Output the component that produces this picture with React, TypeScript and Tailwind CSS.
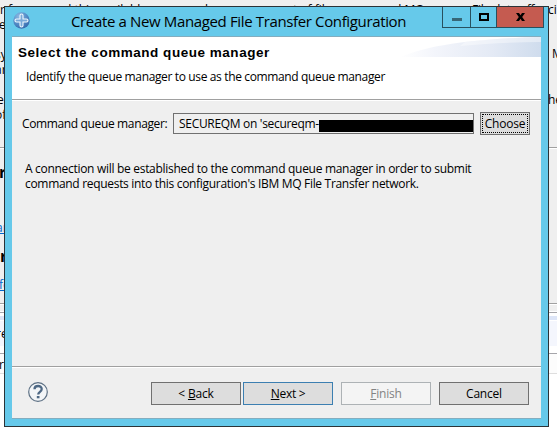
import type { ReactNode } from 'react';

function Line({ children, className }: { children: ReactNode; className: string }) {
  return <span className={'block whitespace-pre ' + className}>{children}</span>;
}

function Backdrop() {
  return (
    <div className="flex h-[433px] w-[557px] flex-col overflow-hidden bg-white">
      <div className="h-[147px] shrink-0 bg-[#efefef]" />
      <div className="h-px shrink-0 bg-[#a0a0a0]" />
      <div className="h-px shrink-0 bg-white" />
      <div className="h-[154px] shrink-0 bg-[#efefef]" />
      <div className="h-px shrink-0 bg-[#a0a0a0]" />
      <div className="h-px shrink-0 bg-white" />
      <div className="h-[6px] shrink-0 bg-[#efefef]" />
      <div className="h-px shrink-0 bg-white" />
      <div className="h-px shrink-0 bg-[#a5a5aa]" />
      <div className="h-[3px] shrink-0 bg-white" />
      <div className="h-1 shrink-0 bg-[#dde5f7]" />
      <div className="h-px shrink-0 bg-white" />
      <div className="h-[25px] shrink-0 bg-[#f4f6fd]" />
      <div className="h-[7px] shrink-0 bg-white" />
      <div className="h-px shrink-0 bg-[#a5a5aa]" />
      <div className="h-[19px] shrink-0 bg-[#fcfcfc]" />
      <div className="h-px shrink-0 bg-[#dedede]" />
    </div>
  );
}

function Scrap({ x, y, className = 'text-[12px]', children }: { x: number; y: number; className?: string; children: ReactNode }) {
  return (
    <span className={'absolute whitespace-pre leading-4 ' + className} style={{ left: x, top: y }}>
      {children}
    </span>
  );
}

function WizardButton({ className, children }: { className: string; children: ReactNode }) {
  return (
    <button className={'flex h-[23px] w-[90px] items-center justify-center border text-[12px] leading-4 ' + className}>
      {children}
    </button>
  );
}

export default function App() {
  return (
    <div className="relative h-[433px] w-[557px] overflow-hidden font-['Open_Sans','Noto_Sans',sans-serif] text-black">
      <Backdrop />
      <Scrap x={0} y={2}>r f</Scrap>
      <Scrap x={64} y={2}>d this available</Scrap>
      <Scrap x={205} y={2}>b</Scrap>
      <Scrap x={293} y={2}>t of files</Scrap>
      <Scrap x={394} y={2}>d MQ</Scrap>
      <Scrap x={472} y={2} className="text-[12px] tracking-[-0.2px]">File data eff</Scrap>
      <Scrap x={548} y={2}>ci</Scrap>
      <Scrap x={-1} y={17}>e</Scrap>
      <Scrap x={-5} y={47}>sy</Scrap>
      <Scrap x={-5} y={62}>ar</Scrap>
      <Scrap x={552} y={46}>M</Scrap>
      <Scrap x={-3} y={92}>e</Scrap>
      <Scrap x={548} y={92}>he</Scrap>
      <Scrap x={-5} y={107}>of</Scrap>
      <Scrap x={-1} y={164} className="text-[16px] font-bold">r</Scrap>
      <Scrap x={-4} y={220} className="text-[12px] text-[#0066cc] underline">ar</Scrap>
      <Scrap x={0} y={248} className="text-[16px] font-bold">r</Scrap>
      <Scrap x={-1} y={277} className="text-[12px] text-[#0066cc] underline">fe</Scrap>
      <Scrap x={-4} y={326}>re</Scrap>
      <Scrap x={-1} y={357}>rr</Scrap>

      <div className="absolute left-1 top-[6px] flex h-[421px] w-[545px] flex-col border border-[#2b3337] bg-[#66c9ea]">
        <header className="flex h-[29px] shrink-0 items-start">
          <svg className="ml-2 mt-[5px] h-[17px] w-[17px] shrink-0" viewBox="0 0 17 17">
            <defs>
              <radialGradient id="orb" cx=".35" cy=".25" r=".8">
                <stop offset="0" stopColor="#8db8e2" />
                <stop offset=".5" stopColor="#5a92cb" />
                <stop offset="1" stopColor="#3468ac" />
              </radialGradient>
            </defs>
            <circle cx="8.5" cy="8.5" r="8.2" fill="url(#orb)" />
            <path d="M7 3.500a1.500 1.500 0 0 1 3 0V7h3.500a1.500 1.500 0 0 1 0 3H10v3.500a1.500 1.500 0 0 1-3 0V10H3.500a1.500 1.500 0 0 1 0-3H7z" fill="#79a9d8" stroke="#f0f7fd" strokeWidth="1.100" />
          </svg>
          <h1 className="ml-[41px] mt-[3px] w-[371px] text-[15px] leading-[22px] font-normal">
            <Line className="tracking-[-0.36px]">Create a New Managed File Transfer Configuration</Line>
          </h1>
          <div className="flex h-[21px] w-[102px] shrink-0 border-x border-b border-[#28505e]">
            <button className="flex w-[27px] items-center justify-center">
              <span className="mt-[5px] h-[3px] w-[10px] bg-[#376777]" />
            </button>
            <button className="flex w-[27px] items-center justify-center border-x border-[#28505e]">
              <span className="h-2 w-[10px] border-2 border-black" />
            </button>
            <button className="flex w-[46px] items-center justify-center bg-[#c55b50]">
              <svg className="h-2 w-[9px]" viewBox="0 0 9 8">
                <path d="M0 0h3l1.500 2.300L6 0h3L6.200 4 9 8H6L4.500 5.700 3 8H0l2.800-4z" />
              </svg>
            </button>
          </div>
        </header>

        <main className="ml-[7px] mr-[7px] flex h-[383px] shrink-0 flex-col border-y border-[#83adbf] bg-[#efefef]">
          <section className="flex h-[62px] shrink-0 bg-white">
            <div className="w-[388px] pl-[6px] pt-2">
              <h2 className="font-['Liberation_Sans',Arial,sans-serif] text-[13.5px] leading-4 font-bold">
                <Line className="tracking-[0.53px]">Select the command queue manager</Line>
              </h2>
              <p className="ml-2 mt-2 text-[12px] leading-4">
                <Line className="tracking-[-0.36px]">Identify the queue manager to use as the command queue manager</Line>
              </p>
            </div>
            <svg className="h-5 w-[141px]" viewBox="0 0 141 20">
              <defs>
                <linearGradient id="swoosh">
                  <stop offset="0" stopColor="#fff" />
                  <stop offset=".25" stopColor="#f3f5fb" />
                  <stop offset=".65" stopColor="#e4eaf5" />
                  <stop offset="1" stopColor="#cfdced" />
                </linearGradient>
              </defs>
              <path d="M0 20C30 8 70 2 141 0v20z" fill="url(#swoosh)" />
              <path d="M65 5Q100 1 141 0v5Q105 5 60 9z" fill="#fff" opacity=".4" />
            </svg>
          </section>
          <div className="h-px shrink-0 bg-[#a0a0a0]" />
          <div className="h-px shrink-0 bg-white" />

          <section className="flex h-[265px] shrink-0 flex-col pt-[11px]">
            <div className="flex h-[23px] items-center pl-[10px]">
              <label className="w-[151px] text-[12px] leading-4">
                <Line className="tracking-[-0.36px]">Command queue manager:</Line>
              </label>
              <div className="flex h-[21px] w-[301px] items-center border border-[#707070] pl-[5px] text-[12px] leading-4">
                <Line className="w-[140px] shrink-0 tracking-[-0.31px]">SECUREQM on 'secureqm-</Line>
                <span className="mt-1 h-3 w-[154px] shrink-0 bg-black" />
              </div>
              <button className="ml-[6px] flex h-[23px] w-[50px] items-center border border-[#707070] bg-[#dddddd] p-px">
                <span className="flex h-[19px] w-full items-center justify-center border border-dotted border-black text-[12px] leading-4">
                  <Line className="tracking-[-0.2px]">Choose</Line>
                </span>
              </button>
            </div>
            <p className="ml-[13px] mt-[26px] text-[12px] leading-[15px]">
              <Line className="tracking-[-0.3px]">A connection will be established to the command queue manager in order to submit</Line>
              <Line className="tracking-[-0.31px]">command requests into this configuration's IBM MQ File Transfer network.</Line>
            </p>
          </section>

          <div className="h-px shrink-0 bg-[#a0a0a0]" />
          <div className="h-px shrink-0 bg-white" />
          <footer className="flex items-start pl-4 pt-[14px]">
            <svg className="h-5 w-5" viewBox="0 0 20 20">
              <circle cx="10" cy="10" r="9.300" fill="#f3f5f7" stroke="#5d7084" strokeWidth="1.200" />
              <path d="M6.500 7.200C6.500 2.900 13.700 3 13.700 7c0 2.900-3.500 2.700-3.500 5.600" fill="none" stroke="#4e6884" strokeWidth="2.300" />
              <path d="M8.800 14h2.700v2.300H8.800z" fill="#4e6884" />
            </svg>
            <div className="ml-[103px] flex">
              <WizardButton className="border-[#707070] bg-[#dddddd]">
                <Line className="tracking-[-0.2px]">&lt; <u>B</u>ack</Line>
              </WizardButton>
              <WizardButton className="ml-[2px] border-[#3c7fb1] bg-[#dddddd]">
                <Line className="tracking-[-0.3px]"><u>N</u>ext &gt;</Line>
              </WizardButton>
              <WizardButton className="ml-2 border-[#adb2b5] bg-[#f4f4f4] text-[#838383]">
                <Line className="tracking-[-0.2px]"><u>F</u>inish</Line>
              </WizardButton>
              <WizardButton className="ml-2 border-[#707070] bg-[#dddddd]">
                <Line className="tracking-[-0.2px]">Cancel</Line>
              </WizardButton>
            </div>
          </footer>
        </main>
      </div>
    </div>
  );
}
